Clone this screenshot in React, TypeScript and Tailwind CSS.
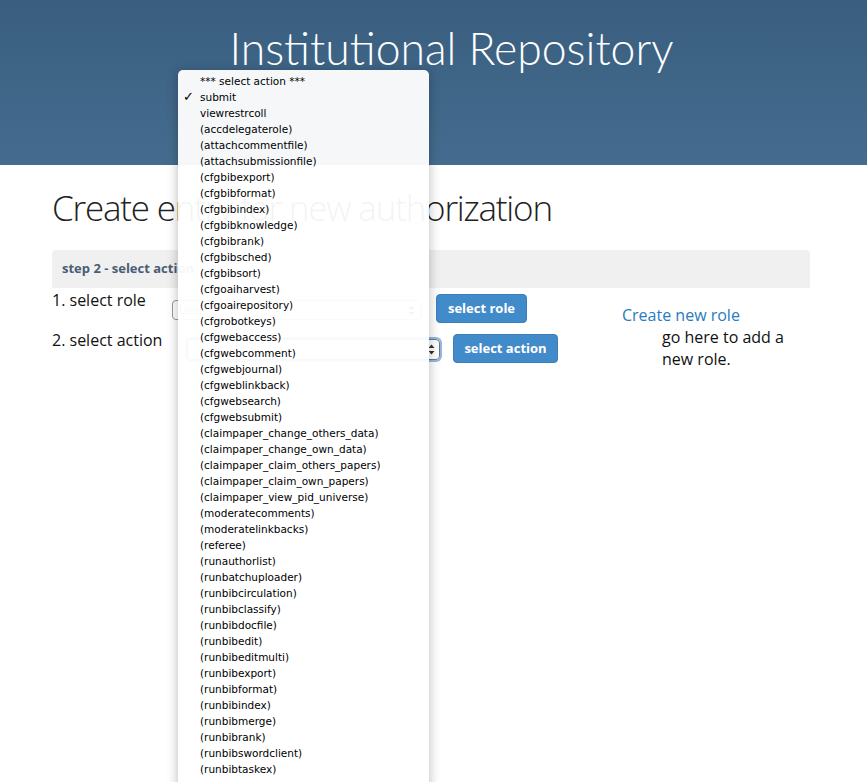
import React from 'react'

const actions = [
  '*** select action ***',
  'submit',
  'viewrestrcoll',
  '(accdelegaterole)',
  '(attachcommentfile)',
  '(attachsubmissionfile)',
  '(cfgbibexport)',
  '(cfgbibformat)',
  '(cfgbibindex)',
  '(cfgbibknowledge)',
  '(cfgbibrank)',
  '(cfgbibsched)',
  '(cfgbibsort)',
  '(cfgoaiharvest)',
  '(cfgoairepository)',
  '(cfgrobotkeys)',
  '(cfgwebaccess)',
  '(cfgwebcomment)',
  '(cfgwebjournal)',
  '(cfgweblinkback)',
  '(cfgwebsearch)',
  '(cfgwebsubmit)',
  '(claimpaper_change_others_data)',
  '(claimpaper_change_own_data)',
  '(claimpaper_claim_others_papers)',
  '(claimpaper_claim_own_papers)',
  '(claimpaper_view_pid_universe)',
  '(moderatecomments)',
  '(moderatelinkbacks)',
  '(referee)',
  '(runauthorlist)',
  '(runbatchuploader)',
  '(runbibcirculation)',
  '(runbibclassify)',
  '(runbibdocfile)',
  '(runbibedit)',
  '(runbibeditmulti)',
  '(runbibexport)',
  '(runbibformat)',
  '(runbibindex)',
  '(runbibmerge)',
  '(runbibrank)',
  '(runbibswordclient)',
  '(runbibtaskex)',
]

function Stepper() {
  return (
    <svg width="7" height="11" viewBox="0 0 7 11" className="shrink-0">
      <path d="M3.5 0.5 L6.5 4 L0.5 4 Z" fill="#333" />
      <path d="M3.5 10.5 L6.5 7 L0.5 7 Z" fill="#333" />
    </svg>
  )
}

export default function App() {
  return (
    <div className="relative h-[782px] overflow-hidden bg-white font-['Open_Sans',sans-serif]">
      {/* header */}
      <div className="h-[165px] bg-linear-to-b from-[#395e7f] to-[#456c8f] flex justify-center">
        <h1 className="mt-[21px] ml-[36px] text-[44.5px] leading-[54px] font-light text-white font-['Lato',sans-serif]">
          Institutional Repository
        </h1>
      </div>

      <div className="px-[52px]">
        <h2 className="mt-[20px] text-[35px] leading-[46px] font-light text-[#222] tracking-[-1.2px]">
          Create entry for new authorization
        </h2>

        <div className="mt-[19px] w-[758px] h-[38px] bg-[#f0f0f0] rounded-t-[4px] flex items-center px-[10px]">
          <span className="text-[13px] font-bold text-[#4a5d75]">step 2 - select action</span>
        </div>

        <div className="flex">
          <div className="w-[570px]">
            {/* row 1 */}
            <div className="flex h-[40px]">
              <div className="w-[120px] pt-[1px] text-[16px] leading-[22px] text-[#111]">1. select role</div>
              <div className="pt-[12px]">
                <div className="w-[250px] h-[20px] border border-[#999] rounded-[4px] flex items-center justify-between px-[6px] text-[11px] text-[#555]">
                  <span>User</span>
                  <Stepper />
                </div>
              </div>
              <div className="pt-[6px] pl-[14px]">
                <button className="w-[91px] h-[29px] bg-[#428bca] border border-[#3a7ebb] rounded-[4px] text-white text-[13px] font-bold">
                  select role
                </button>
              </div>
            </div>
            {/* row 2 */}
            <div className="flex h-[40px]">
              <div className="w-[135px] pt-[1px] text-[16px] leading-[22px] text-[#111]">2. select action</div>
              <div className="pt-[11px]">
                <div className="w-[253px] h-[21px] border border-[#777] rounded-[4px] ring-2 ring-[#8fb8e8] flex items-center justify-end px-[4px] text-[11px]">
                  <Stepper />
                </div>
              </div>
              <div className="pt-[6px] pl-[13px]">
                <button className="w-[105px] h-[29px] bg-[#428bca] border border-[#3a7ebb] rounded-[4px] text-white text-[13px] font-bold">
                  select action
                </button>
              </div>
            </div>
          </div>

          <div className="pt-[16px]">
            <a className="block text-[16px] leading-[22px] text-[#2a7bc1]" href="#">Create new role</a>
            <p className="ml-[40px] w-[140px] text-[16px] leading-[22px] text-[#111]">go here to add a new role.</p>
          </div>
        </div>
      </div>

      {/* native select popup */}
      <div className="absolute left-[178px] top-[70px] w-[251px] h-[730px] pt-[3px] bg-white/95 rounded-[5px] shadow-[0_2px_12px_rgba(0,0,0,0.28)] font-['DejaVu_Sans',sans-serif] text-[10.5px] text-black">
        {actions.map((a, i) => (
          <div key={a} className="relative h-[16px] leading-[16px] pl-[22px] whitespace-nowrap">
            {i === 1 && (
              <span className="absolute left-[5px] top-0 text-[13px] font-bold">✓</span>
            )}
            {a}
          </div>
        ))}
      </div>
    </div>
  )
}
